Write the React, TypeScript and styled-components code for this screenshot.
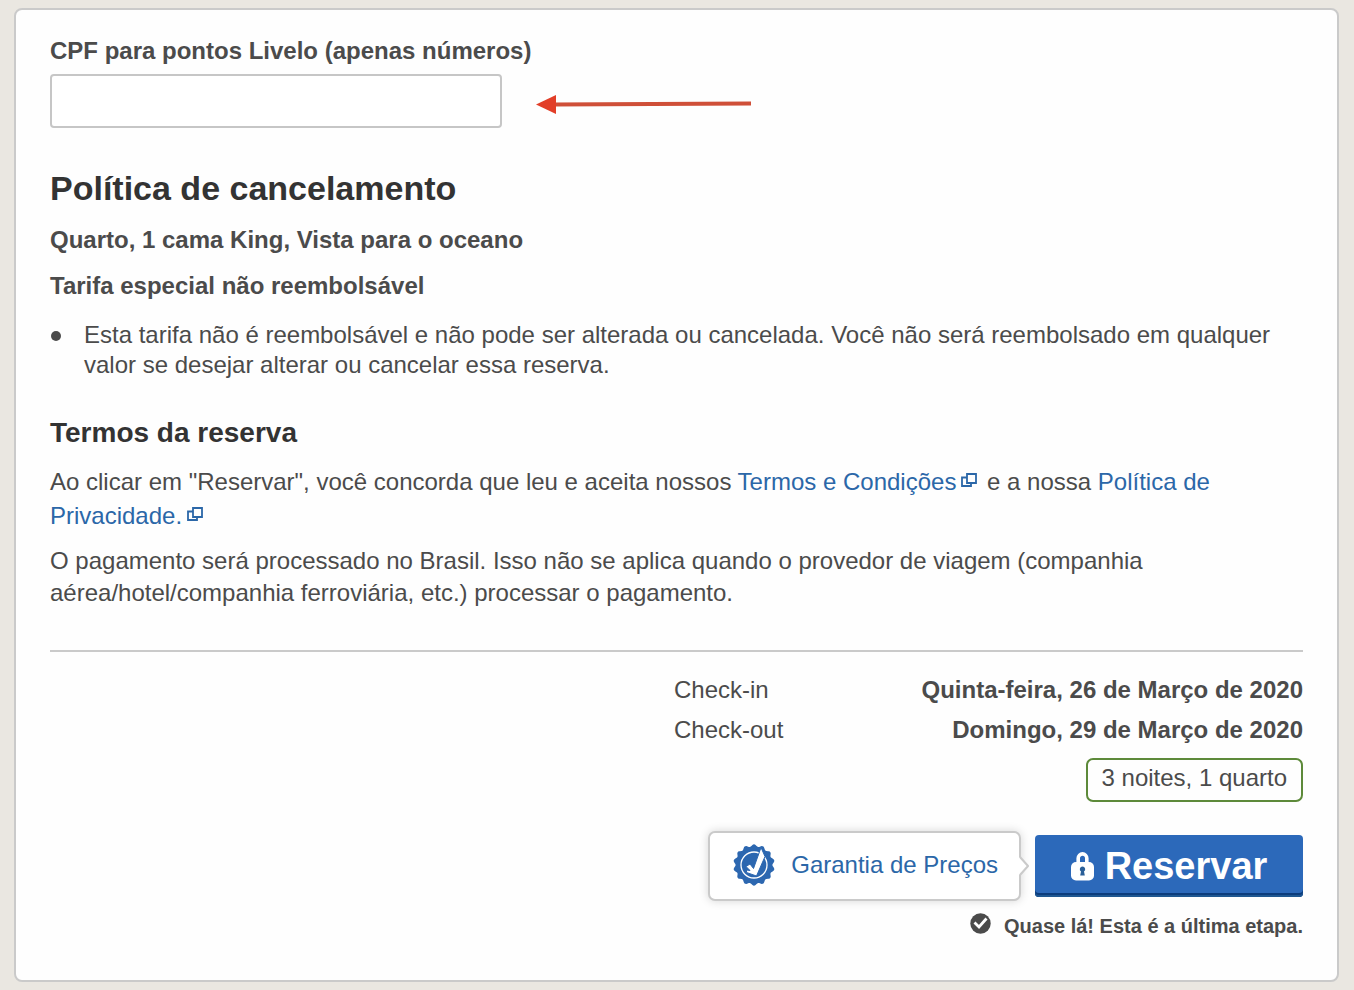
import React from "react";
import styled, { createGlobalStyle } from "styled-components";

const GlobalStyle = createGlobalStyle`
  * { box-sizing: border-box; }
  body {
    margin: 0;
    background: #eae7e1;
    color: #4b4b4b;
    font-family: "Liberation Sans", Arial, Helvetica, sans-serif;
    font-size: 24px;
    line-height: 30px;
  }
`;

const Card = styled.main`
  margin: 8px 15px 8px 14px;
  padding: 26px 34px 41px;
  background: #fefefe;
  border: 2px solid #cacaca;
  border-radius: 8px;
`;

const FieldLabel = styled.label`
  display: block;
  margin-bottom: 8px;
  font-weight: bold;
`;

const FieldRow = styled.div`
  display: flex;
  align-items: center;
  gap: 34px;
`;

const TextInput = styled.input`
  width: 452px;
  height: 54px;
  padding: 0 12px;
  border: 2px solid #c6c6c6;
  border-radius: 4px;
  background: #fff;
  color: inherit;
  font: inherit;
`;

const SectionTitle = styled.h2`
  margin: 40px 0 17px;
  color: #333;
  font-size: 34px;
  line-height: 40px;
`;

const SubTitle = styled.h3`
  margin: 36px 0 15px;
  color: #333;
  font-size: 28px;
  line-height: 34px;
`;

const Strong = styled.p`
  margin: 0 0 16px;
  font-weight: bold;
`;

const RuleList = styled.ul`
  margin: 19px 0 0;
  padding: 0;
  list-style: none;
`;

const Rule = styled.li`
  display: grid;
  grid-template-columns: 34px 1fr;

  &::before {
    content: "";
    width: 10px;
    height: 10px;
    margin: 11px 0 0 1px;
    border-radius: 50%;
    background: #4b4b4b;
  }
`;

const Paragraph = styled.p<{ $leading: number }>`
  margin: 0 0 12px;
  line-height: ${(p) => p.$leading}px;
`;

const TextLink = styled.a`
  color: #2b67a8;
  text-decoration: none;

  svg { margin: 0 3px 2px 5px; }
`;

const Divider = styled.hr`
  height: 2px;
  margin: 41px 0 18px;
  border: 0;
  background: #cacaca;
`;

const Stay = styled.dl`
  display: grid;
  grid-template-columns: auto 1fr;
  width: 629px;
  max-width: 100%;
  margin: 0 0 8px auto;
  line-height: 40px;

  dt, dd { margin: 0; }
  dd { font-weight: bold; text-align: right; }
`;

const Nights = styled.p`
  width: fit-content;
  height: 44px;
  margin: 0 0 0 auto;
  padding: 3px 14px;
  border: 2px solid #5d8a3a;
  border-radius: 7px;
`;

const Actions = styled.div`
  display: flex;
  justify-content: flex-end;
  align-items: center;
  gap: 14px;
  margin-top: 29px;
`;

const Guarantee = styled.a`
  position: relative;
  display: flex;
  align-items: center;
  gap: 16px;
  height: 70px;
  padding: 0 21px 2px 23px;
  border: 2px solid #cacaca;
  border-radius: 7px;
  background: #fff;
  box-shadow: 0 0 10px rgba(0, 0, 0, 0.16);
  color: #2b67a8;
  text-decoration: none;
`;

const Pointer = styled.svg`
  position: absolute;
  top: 21px;
  left: 100%;
`;

const ReserveButton = styled.button`
  display: flex;
  justify-content: center;
  align-items: center;
  gap: 11px;
  width: 268px;
  height: 62px;
  padding: 0;
  border: 0;
  border-radius: 4px;
  background: #2c69ba;
  box-shadow: inset 0 -2px #1f5791, inset 0 -4px #0c3c7c;
  color: #fff;
  font: bold 38px/44px "Liberation Sans", Arial, sans-serif;
  cursor: pointer;
`;

const LastStep = styled.p`
  display: flex;
  justify-content: flex-end;
  align-items: flex-start;
  gap: 13px;
  margin: 12px 0 0;
  font-size: 20px;
  line-height: 26px;
  font-weight: bold;
`;

const ArrowDrawing = () => (
  <svg width="216" height="26" viewBox="0 0 216 26" aria-hidden="true">
    <path d="M18 16.5 215 15.5" stroke="#cf4f38" strokeWidth="4" />
    <path d="M0 16.5 20 7V26Z" fill="#e23e28" />
  </svg>
);

const NewWindowIcon = () => (
  <svg width="16" height="15" viewBox="0 0 16 15" fill="none" stroke="currentColor" strokeWidth="1.8" aria-hidden="true">
    <path d="M6 1H15V10H6Z" />
    <path d="M6 4.5H1V13H10V10" />
  </svg>
);

const sealPoints = Array.from({ length: 160 }, (_, i) => {
  const a = (i / 160) * Math.PI * 2;
  const r = 19.6 + 1.2 * Math.cos(a * 14);
  return `${(21 + r * Math.sin(a)).toFixed(2)},${(21 - r * Math.cos(a)).toFixed(2)}`;
}).join(" ");

const SealIcon = () => (
  <svg width="42" height="42" viewBox="0 0 42 42" aria-hidden="true">
    <polygon points={sealPoints} fill="#2c67b0" />
    <circle cx="21" cy="21" r="13" fill="none" stroke="#fff" strokeWidth="1.3" />
    <path
      d="M13 22.5 17 20 20.5 24.5 28 3.5 32 12.5 23.5 32 13.5 28.5 13.5 26 17 26.500Z"
      fill="#fff"
      stroke="#2c67b0"
      strokeWidth="1"
    />
  </svg>
);

const LockIcon = () => (
  <svg width="23" height="29" viewBox="0 0 23 29" aria-hidden="true">
    <path d="M7.2 13V6.200A4.300 4.300 0 0 1 15.800 6.200V13" fill="none" stroke="#fff" strokeWidth="3.600" />
    <rect y="10" width="23" height="18.500" rx="5" fill="#fff" />
    <path d="M11.500 14.500A2.800 2.800 0 0 1 13 19.600L13.800 23.500H9.200L10 19.600A2.800 2.800 0 0 1 11.500 14.500Z" fill="#2a5f98" />
  </svg>
);

const CheckIcon = () => (
  <svg width="21" height="21" viewBox="0 0 21 21" aria-hidden="true">
    <circle cx="10.500" cy="10.500" r="10.200" fill="#4b4b4b" />
    <path d="M4.500 9.500 9 14 16.500 5.500" fill="none" stroke="#fff" strokeWidth="2.800" />
  </svg>
);

export default function App() {
  return (
    <>
      <GlobalStyle />
      <Card>
        <FieldLabel htmlFor="cpf">CPF para pontos Livelo (apenas números)</FieldLabel>
        <FieldRow>
          <TextInput id="cpf" type="text" inputMode="numeric" />
          <ArrowDrawing />
        </FieldRow>

        <SectionTitle>Política de cancelamento</SectionTitle>
        <Strong>Quarto, 1 cama King, Vista para o oceano</Strong>
        <Strong>Tarifa especial não reembolsável</Strong>
        <RuleList>
          <Rule>
            Esta tarifa não é reembolsável e não pode ser alterada ou cancelada. Você não será reembolsado em
            qualquer valor se desejar alterar ou cancelar essa reserva.
          </Rule>
        </RuleList>

        <SubTitle>Termos da reserva</SubTitle>
        <Paragraph $leading={34}>
          Ao clicar em "Reservar", você concorda que leu e aceita nossos{" "}
          <TextLink href="#termos">
            Termos e Condições
            <NewWindowIcon />
          </TextLink>{" "}
          e a nossa{" "}
          <TextLink href="#privacidade">
            Política de Privacidade.
            <NewWindowIcon />
          </TextLink>
        </Paragraph>
        <Paragraph $leading={32}>
          O pagamento será processado no Brasil. Isso não se aplica quando o provedor de viagem (companhia
          aérea/hotel/companhia ferroviária, etc.) processar o pagamento.
        </Paragraph>

        <Divider />
        <Stay>
          <dt>Check-in</dt>
          <dd>Quinta-feira, 26 de Março de 2020</dd>
          <dt>Check-out</dt>
          <dd>Domingo, 29 de Março de 2020</dd>
        </Stay>
        <Nights>3 noites, 1 quarto</Nights>

        <Actions>
          <Guarantee href="#garantia">
            <SealIcon />
            Garantia de Preços
            <Pointer width="10" height="24" viewBox="0 0 10 24" aria-hidden="true">
              <path d="M0 3 8 12 0 21Z" fill="#fff" />
              <path d="M1 3 9 12 1 21" fill="none" stroke="#cacaca" strokeWidth="2" />
            </Pointer>
          </Guarantee>
          <ReserveButton type="button">
            <LockIcon />
            Reservar
          </ReserveButton>
        </Actions>
        <LastStep>
          <CheckIcon />
          Quase lá! Esta é a última etapa.
        </LastStep>
      </Card>
    </>
  );
}
